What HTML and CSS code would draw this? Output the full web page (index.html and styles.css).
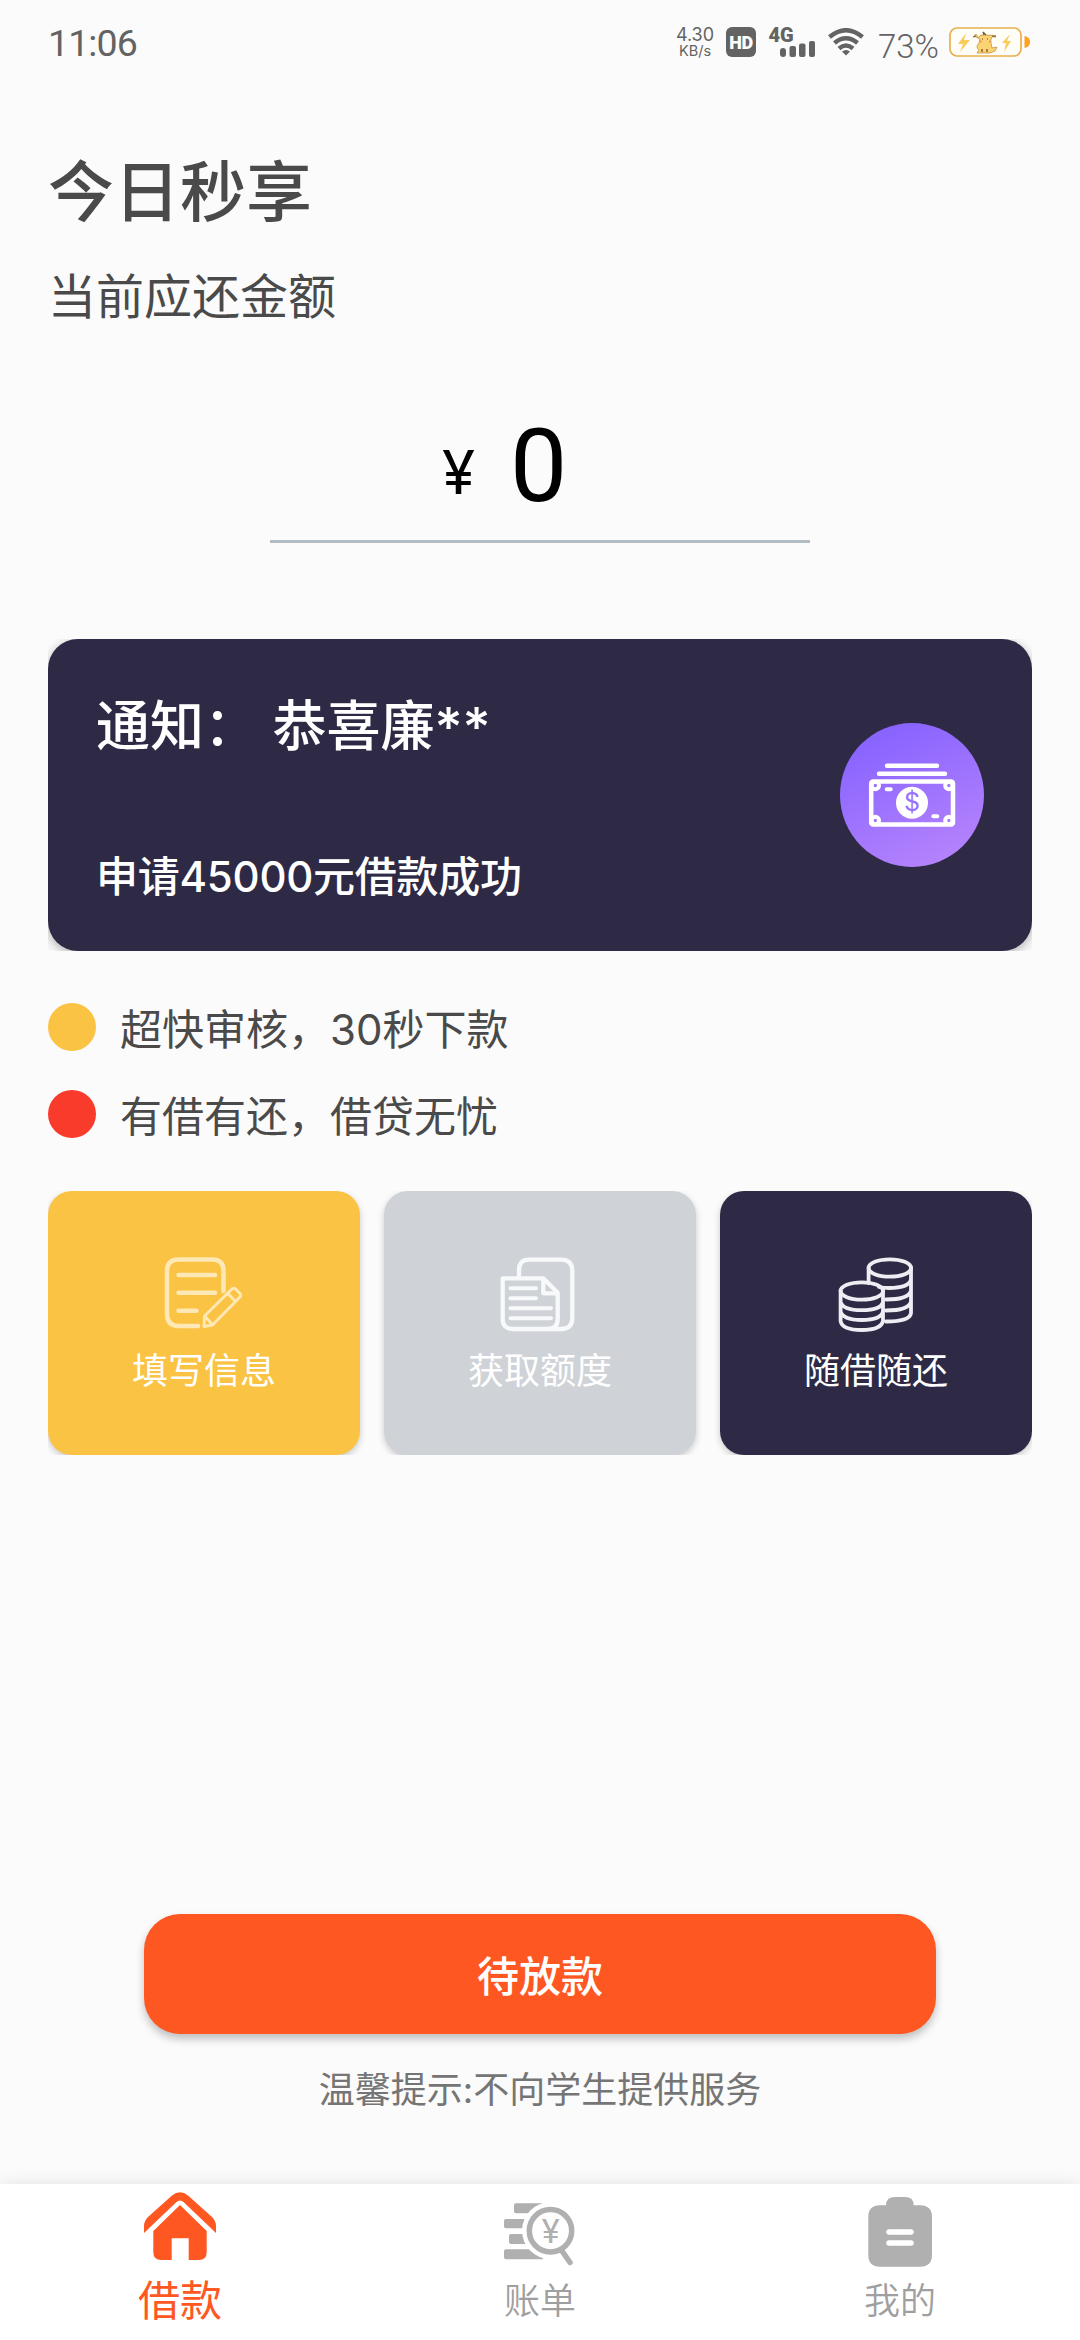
FILE: index.html
```html
<!DOCTYPE html>
<html lang="zh-CN">
<head>
<meta charset="utf-8">
<title>今日秒享</title>
<link rel="stylesheet" href="styles.css">
</head>
<body>
<div class="screen">
  <header class="status">
    <span class="clock">11:06</span>
    <div class="indicators">
      <div class="speed"><span class="speed-value">4.30</span><span class="speed-unit">KB/s</span></div>
      <span class="hd">HD</span>
      <svg class="cell" viewBox="0 0 48 30" fill="#636363">
        <text x=".5" y="15" class="cell-text">4G</text>
        <rect x="12" y="21" width="6" height="9" rx="3"/>
        <rect x="21.500" y="19" width="6.500" height="11" rx="2"/>
        <rect x="31" y="16.500" width="6.500" height="13.500" rx="2"/>
        <rect x="41" y="14" width="6" height="16" rx="2"/>
      </svg>
      <svg class="wifi" viewBox="0 0 36 28" fill="none" stroke="#636363" stroke-width="4.500">
        <path d="M1.500 9Q18-4.500 34.500 9"/>
        <path d="M6.500 15Q18 5.500 29.500 15"/>
        <path d="M11 20.500Q18 14.500 25 20.500"/>
        <path d="M14 23.500Q18 20.500 22 23.500L18 27.500Z" fill="#636363" stroke="none"/>
      </svg>
      <span class="percent">73%</span>
      <svg class="battery" viewBox="0 0 82 30">
        <rect x="1" y="1" width="71" height="28" rx="7" fill="#fffdf8" stroke="#e8b04e" stroke-width="1.700"/>
        <path d="M75.500 9Q81 10 81 15T75.500 21Z" fill="#fda11f"/>
        <path d="M17 6L9 17H14L11 25L21 13H15ZM61 7L53 16H57L55 25L62 14H58Z" fill="#fbcb5c"/>
        <path d="M29 11Q31 7 35 8L47 8.500L43 10Q41 13 42 16L43 21L48 20L46 24L41 26H28L30 23Q26 20 30 16L31 12L25 9L27 7Z" fill="#fbd373" stroke="#c19345" stroke-width=".8"/>
        <path d="M35 8L34 5L37 8M24 10L27 9M43 9L47 10" fill="none" stroke="#765c36" stroke-width="1.200"/>
        <path d="M33 12h1M38 12h1M33 22V25M38 22V25" stroke="#6a4527" stroke-width="1.200"/>
        <path d="M31 14.500h1.500M40 14.500h1.500" stroke="#e98152" stroke-width="1.500"/>
      </svg>
    </div>
  </header>

  <main class="content">
    <h1 class="title">今日秒享</h1>
    <p class="subtitle">当前应还金额</p>
    <div class="amount"><span class="currency">¥</span><span class="value">0</span></div>

    <div class="notice-wrap">
      <section class="notice">
        <div class="notice-text">
          <p class="notice-title">通知： 恭喜廉**</p>
          <p class="notice-body">申请45000元借款成功</p>
        </div>
        <div class="money">
          <svg viewBox="0 0 144 144" fill="none" stroke="#fff" stroke-linecap="round">
            <path d="M47 42.700H97M39 50.700H105" stroke-width="4.500"/>
            <rect x="31.200" y="58.600" width="81.800" height="43" rx="2" stroke-width="4.500"/>
            <g stroke-width="4">
              <circle cx="35.300" cy="62.500" r="3.700"/><circle cx="108.900" cy="62.500" r="3.700"/>
              <circle cx="35.300" cy="97.500" r="3.700"/><circle cx="108.900" cy="97.500" r="3.700"/>
              <path d="M46.700 66.300H50.700M93.300 93.300H97.300"/>
            </g>
            <circle cx="72" cy="79.700" r="16" fill="#fff" stroke="none"/>
            <text x="72" y="87.500" class="dollar">$</text>
          </svg>
        </div>
      </section>
    </div>

    <ul class="features">
      <li><i class="dot yellow"></i><span>超快审核，30秒下款</span></li>
      <li><i class="dot red"></i><span>有借有还，借贷无忧</span></li>
    </ul>

    <div class="steps">
      <div class="step fill">
        <svg viewBox="0 0 80 80" fill="none" stroke="#fee8b6" stroke-width="4.500" stroke-linecap="round" stroke-linejoin="round">
          <path d="M59.500 37V17Q59.500 5.500 48 5.500H15Q3 5.500 3 17V60Q3 72 15 72H34M14.500 21H51M14.500 38.700H51M14.500 56.700H32.500"/>
          <path d="M40.500 62L68 35Q70 33.500 72 35.500L76 39.500Q77.500 41.500 75.500 43.500L48.500 71L40 72.500ZM64 39.500L71 47M41 62.500L48 70" stroke-width="2.900"/>
        </svg>
        <span>填写信息</span>
      </div>
      <div class="step quota">
        <svg viewBox="0 0 80 80" fill="none" stroke="#f7f9fa" stroke-width="4.300" stroke-linecap="round" stroke-linejoin="round">
          <path d="M19 23V16Q19 5.700 29 5.700H61Q72.300 5.700 72.300 17V64Q72.300 75 61 75H48"/>
          <path d="M2.700 24.300H43.300L57.700 38.700V65Q57.700 75 48 75H13Q2.700 75 2.700 65ZM43.300 24.300V39.300H57"/>
          <path d="M10.500 34.300H36M10.500 44.300H36M10.500 54.300H51M10.500 64.300H51" stroke-width="4"/>
        </svg>
        <span>获取额度</span>
      </div>
      <div class="step repay">
        <svg viewBox="0 0 80 80" fill="none" stroke="#eeedf3" stroke-width="3.800" stroke-linecap="round">
          <ellipse cx="53.800" cy="14" rx="21.200" ry="8.700"/>
          <path d="M32.600 14V29M75 14V59Q74 67.500 50 67.500M75 25.500Q73 34 53 34Q48 34 43 33M75 37Q72 45.500 50 45.500M75 48Q72 56.500 50 56.500"/>
          <ellipse cx="25.800" cy="37" rx="21.200" ry="8.700"/>
          <path d="M4.600 37V67Q6 76 25.800 76Q45 76 47 67V37M4.600 48Q7 56.200 25.800 56.200Q45 56.200 47 48M4.600 57.500Q7 66 25.800 66Q45 66 47 57.500"/>
        </svg>
        <span>随借随还</span>
      </div>
    </div>

    <button class="submit">待放款</button>
    <p class="hint">温馨提示:不向学生提供服务</p>
  </main>

  <nav class="tabs">
    <a class="tab active">
      <svg viewBox="0 0 72 76" fill="#ff5722">
        <path d="M0 41V34Q0 29 4 25L28 3.500Q36-3 44 3.500L68 25Q72 29 72 34V41L39.500 10Q36 7 32.500 10Z"/>
        <path d="M36 13L62.700 39V60Q62.700 68 54.700 68H44.700V46.300H27.700V68H17.300Q9.300 68 9.300 60V39Z"/>
      </svg>
      <span>借款</span>
    </a>
    <a class="tab">
      <svg viewBox="0 -8 72 76" fill="#b0b0b0">
        <path d="M12 3.300H38V13.300H12Q10 13.300 10 11.300V5.300Q10 3.300 12 3.300ZM2 19H24V28.300H2Q0 28.300 0 26.300V21Q0 19 2 19ZM7 34H24V44H7Q5 44 5 42V36Q5 34 7 34ZM2 49.300H39V59.300H2Q0 59.300 0 57.300V51.300Q0 49.300 2 49.300Z"/>
        <circle cx="46.500" cy="30.700" r="28.500" fill="#fff"/>
        <path d="M58 51L66 62.500" stroke="#b0b0b0" stroke-width="5.500" stroke-linecap="round"/>
        <circle cx="46.500" cy="30.700" r="21.200" fill="#fff" stroke="#b0b0b0" stroke-width="5.500"/>
        <text x="46.700" y="43" class="yen">¥</text>
      </svg>
      <span>账单</span>
    </a>
    <a class="tab">
      <svg viewBox="-4 -4 72 76" fill="#b0b0b0">
        <path d="M18 9.300Q18 1 27 1H37Q45.700 1 45.700 9.300H52Q64 9.300 64 21V59Q64 70.700 52 70.700H12Q.3 70.700 .3 59V21Q.3 9.300 12 9.300Z"/>
        <path d="M21 36H43M21 47H43" stroke="#fff" stroke-width="5.500" stroke-linecap="round"/>
      </svg>
      <span>我的</span>
    </a>
  </nav>
</div>
</body>
</html>
```
FILE: styles.css
```css
* { box-sizing: border-box; }
body, h1, p, ul { margin: 0; padding: 0; }
body {
  background: #fbfbfb;
  color: #4a4a4a;
  font-family: Inter, "Noto Sans CJK SC", sans-serif;
}
.screen {
  width: 1080px;
  height: 2340px;
  display: flex;
  flex-direction: column;
  overflow: hidden;
}

/* Status bar */
.status {
  height: 84px;
  padding: 0 49px 0 48px;
  display: flex;
  justify-content: space-between;
  align-items: center;
  color: #636363;
  font-family: Roboto, sans-serif;
}
.clock { padding-top: 2px; font-size: 37.500px; letter-spacing: -0.9px; }
.indicators { display: flex; align-items: center; }
.speed {
  width: 42px;
  margin-right: 10px;
  display: flex;
  flex-direction: column;
  align-items: center;
  font-family: Inter, sans-serif;
}
.speed-value { font-size: 18px; line-height: 17px; }
.speed-unit { font-size: 14.500px; line-height: 15px; }
.hd {
  width: 30px;
  height: 30px;
  margin-right: 12px;
  border-radius: 6px;
  background: #636363;
  color: #fff;
  font-size: 18px;
  font-weight: 900;
  line-height: 31px;
  text-align: center;
  letter-spacing: -0.5px;
}
.cell { width: 48px; height: 30px; margin-right: 12px; overflow: visible; }
.cell-text { font: 900 20px Roboto, sans-serif; }
.wifi { width: 36px; height: 28px; margin-right: 14px; }
.percent { width: 62px; margin-right: 9px; padding-top: 8px; font-size: 33px; font-weight: 300; }
.battery { width: 82px; height: 30px; }

/* Page content */
.content { flex: 1; padding: 63px 48px 0; }
.title { font-size: 66px; font-weight: 500; line-height: 90px; }
.subtitle { margin-top: 28px; font-size: 48px; line-height: 64px; }
.amount {
  width: 540px;
  height: 135px;
  margin: 79px auto 96px;
  padding-left: 172px;
  display: flex;
  align-items: flex-start;
  border-bottom: 3px solid #b1bcc3;
  color: #000;
}
.currency { width: 68px; font-size: 60px; line-height: 128px; }
.value { font: 102px/116px Roboto, sans-serif; }

.notice-wrap { height: 312px; overflow: hidden; }
.notice {
  height: 312px;
  padding: 8px 48px 0;
  display: flex;
  justify-content: space-between;
  align-items: flex-start;
  border-radius: 30px;
  background: #2e2a45;
  box-shadow: 0 3px 12px rgba(0, 0, 0, .3);
  color: #fff;
  font-weight: 500;
}
.notice-text { padding-top: 42px; display: flex; flex-direction: column; gap: 80px; }
.notice-title { font-size: 54px; line-height: 76px; }
.notice-body { font-size: 42px; line-height: 64px; letter-spacing: -0.25px; }
.money {
  width: 144px;
  height: 144px;
  margin-top: 76px;
  border-radius: 50%;
  background: linear-gradient(155deg, #8964ff 15%, #b885fc 95%);
}
.money svg { display: block; }
.dollar { font: 400 25px Inter, sans-serif; fill: #9971ff; stroke: none; text-anchor: middle; }

.features {
  margin-top: 52px;
  display: flex;
  flex-direction: column;
  gap: 39px;
  list-style: none;
  font-size: 42px;
}
.features li { height: 48px; display: flex; align-items: center; gap: 24px; }
.features span { line-height: 48px; padding-top: 6px; }
.dot { width: 48px; height: 48px; border-radius: 50%; }
.yellow { background: #fbc344; }
.red { background: #f93b2b; }

.steps {
  height: 264px;
  margin-top: 53px;
  display: grid;
  grid-template-columns: repeat(3, 1fr);
  gap: 24px;
  overflow: hidden;
}
.step {
  padding-top: 63px;
  display: flex;
  flex-direction: column;
  align-items: center;
  border-radius: 24px;
  box-shadow: 0 3px 7px rgba(0, 0, 0, .2);
  color: #fff;
  font-size: 36px;
}
.step svg { width: 80px; height: 80px; }
.step span { margin-top: 10px; line-height: 54px; }
.fill { background: #fbc344; }
.quota { background: #cfd3d7; }
.repay { background: #2e2a45; }

.submit {
  display: block;
  width: 792px;
  height: 120px;
  margin: 459px auto 0;
  padding: 0;
  border: 0;
  border-radius: 36px;
  background: #ff5722;
  box-shadow: 0 5px 8px rgba(0, 0, 0, .24);
  color: #fff;
  font: 500 42px/120px "Noto Sans CJK SC", sans-serif;
}
.hint {
  margin-top: 29px;
  color: #757575;
  font-size: 36px;
  line-height: 54px;
  text-align: center;
}

/* Bottom navigation */
.tabs {
  height: 156px;
  display: grid;
  grid-template-columns: repeat(3, 1fr);
  background: #fff;
  box-shadow: 0 0 16px rgba(0, 0, 0, .1);
}
.tab {
  padding-top: 8px;
  display: flex;
  flex-direction: column;
  align-items: center;
  color: #9f9f9f;
  font-size: 36px;
  font-weight: 350;
}
.tab svg { width: 72px; height: 76px; }
.tab span { margin-top: 6px; line-height: 54px; }
.active { color: #ff5722; font-size: 42px; font-weight: 400; }
.yen { font: 400 34px Roboto, sans-serif; text-anchor: middle; }
```
